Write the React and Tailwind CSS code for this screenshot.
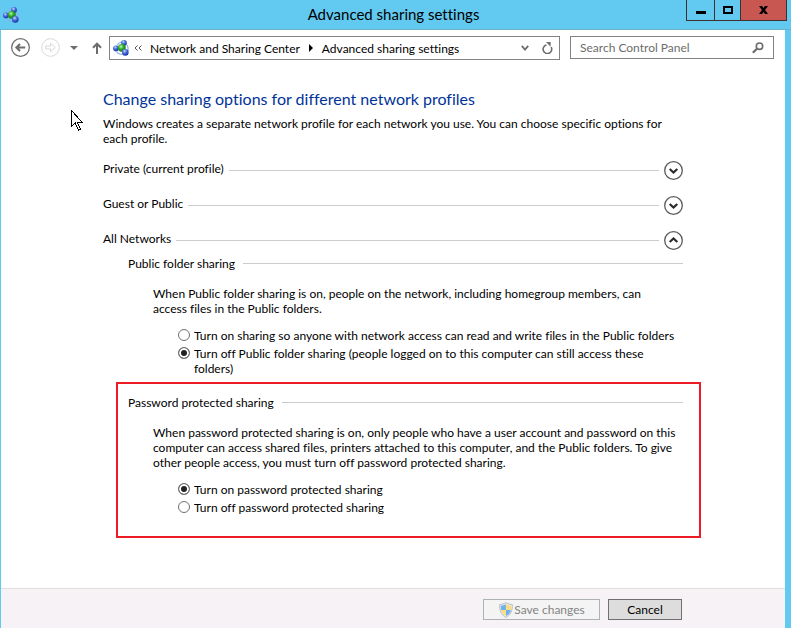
import { useState } from "react";

const NetworkIcon = ({ id }) => (
  <svg viewBox="0 0 16 16" className="h-4 w-4 shrink-0" aria-hidden="true">
    <defs>
      <radialGradient id={`${id}-blue`} cx="0.4" cy="0.3" r="0.7">
        <stop offset="0" stopColor="#c9dafa" />
        <stop offset="0.45" stopColor="#4a70d8" />
        <stop offset="1" stopColor="#1a32a8" />
      </radialGradient>
      <radialGradient id={`${id}-green`} cx="0.4" cy="0.35" r="0.7">
        <stop offset="0" stopColor="#c4f5b0" />
        <stop offset="0.45" stopColor="#2fae2c" />
        <stop offset="1" stopColor="#0a6a12" />
      </radialGradient>
    </defs>
    <path d="M4 5.500C5.500 3 7 2 9 2M14 5c1 1.500 1.300 3.500 1 6M3.500 11.500c1.300 2 3.500 3 5.500 3" fill="none" stroke="#8fb0ea" strokeWidth="1.200" />
    <circle cx="11" cy="3" r="2.900" fill={`url(#${id}-blue)`} />
    <circle cx="2.900" cy="8.400" r="2.800" fill={`url(#${id}-blue)`} />
    <circle cx="8.800" cy="7.800" r="3.900" fill={`url(#${id}-green)`} />
    <circle cx="12.300" cy="12.400" r="3.300" fill={`url(#${id}-blue)`} />
  </svg>
);

const ShieldIcon = () => (
  <svg viewBox="0 0 16 16" className="h-4 w-4 shrink-0" aria-hidden="true">
    <path d="M8 .5c2 1.400 4 1.900 6.300 2 .3 6-1.500 10.400-6.300 13C3.200 12.900 1.400 8.500 1.700 2.500 4 2.400 6 1.900 8 .5z" fill="#e9ebee" stroke="#b9bec5" />
    <path d="M7.900 2.300v5.700H3.100c-.2-1.400-.3-2.900-.2-4.300 1.800-.1 3.300-.6 5-1.400z" fill="#6fb1ee" />
    <path d="M8 2.300V8h4.900c.2-1.400.3-2.900.2-4.300-1.800-.1-3.300-.6-5.100-1.400z" fill="#fbdf7c" />
    <path d="M3.200 8h4.800v6C5.200 12.600 3.700 10.800 3.200 8z" fill="#fbdf7c" />
    <path d="M12.800 8H8v6c2.800-1.400 4.300-3.200 4.800-6z" fill="#6fb1ee" />
  </svg>
);

const Cursor = () => (
  <svg viewBox="0 0 12 21" className="absolute top-[110px] left-[71px] h-[21px] w-3" shapeRendering="crispEdges" aria-hidden="true">
    <path d="M.5.5v16l3.700-3.500 3.300 7.300 2-1-3.200-6.800h5z" fill="#fff" stroke="#000" />
  </svg>
);

const TitleBar = () => (
  <header className="grid h-[30px] grid-cols-[1fr_auto_1fr] items-start border-b border-[#6bb0d0] pr-1">
    <div className="pt-[7px] pl-[3px]">
      <NetworkIcon id="title" />
    </div>
    <h1 className="pt-[3px] text-[15px] leading-[22px]">Advanced sharing settings</h1>
    <div className="flex h-[21px] justify-self-end border-x border-b border-[#40312f]">
      <button aria-label="Minimize" className="flex w-7 justify-center border-r border-[#40312f] pt-[11px]">
        <span className="h-[3px] w-2.5 bg-black" />
      </button>
      <button aria-label="Maximize" className="flex w-[26px] justify-center border-r border-[#40312f] pt-1.5">
        <span className="h-2 w-2.5 border-2 border-black" />
      </button>
      <button aria-label="Close" className="flex w-[45px] justify-center bg-[#c75750] pt-1.5">
        <svg viewBox="0 0 9 8" className="h-2 w-[9px]">
          <path d="M0 0h3l1.500 2L6 0h3L6 4l3 4H6L4.500 6 3 8H0l3-4z" />
        </svg>
      </button>
    </div>
  </header>
);

const NavBar = () => (
  <nav className="flex items-start pt-1.5 pr-[11px] pl-2.5">
    <button aria-label="Back" className="mt-0.5">
      <svg viewBox="0 0 20 20" className="h-[19px] w-[19px]" fill="none" stroke="#6d6d6d">
        <circle cx="10" cy="10" r="9.300" strokeWidth="1.300" />
        <path d="M6 10h9M9.500 6.200L5.700 10l3.800 3.800" strokeWidth="2.200" />
      </svg>
    </button>
    <button aria-label="Forward" className="mt-0.5 ml-[11px]">
      <svg viewBox="0 0 20 20" className="h-[19px] w-[19px]" fill="none" stroke="#d6d6d6">
        <circle cx="10" cy="10" r="9.300" />
        <path d="M5 8.500h5V5.500l5 4.500-5 4.500v-3H5z" />
      </svg>
    </button>
    <button aria-label="Recent pages" className="mt-2.5 ml-2.5">
      <svg viewBox="0 0 8 4" className="h-1 w-2">
        <path d="M0 0h8L4 4z" fill="#6d6d6d" />
      </svg>
    </button>
    <button aria-label="Up" className="mt-1.5 ml-3.5">
      <svg viewBox="0 0 10 12" className="h-3 w-2.5" fill="none" stroke="#6d6d6d" strokeWidth="2">
        <path d="M5 12V2M1 5.700L5 1.700l4 4" />
      </svg>
    </button>
    <div className="ml-[7px] flex h-6 flex-1 items-center border border-[#828282] pr-1.5 pl-[3px]">
      <NetworkIcon id="address" />
      <svg viewBox="0 0 8 6" className="mx-[5px] h-1.5 w-2" fill="none" stroke="#555">
        <path d="M3.500.5L1 3l2.500 2.500M7.500.5L5 3l2.500 2.500" />
      </svg>
      <a href="#network" className="ml-[3px]">Network and Sharing Center</a>
      <svg viewBox="0 0 4 8" className="mx-[9px] h-2 w-1">
        <path d="M0 0l4 4-4 4z" />
      </svg>
      <a href="#advanced">Advanced sharing settings</a>
      <button aria-label="Previous locations" className="ml-auto">
        <svg viewBox="0 0 8 6" className="h-1.5 w-2" fill="none" stroke="#6d6d6d" strokeWidth="1.800">
          <path d="M.8.8L4 4.500 7.200.8" />
        </svg>
      </button>
      <button aria-label="Refresh" className="ml-3">
        <svg viewBox="0 0 12 12" className="h-3 w-3" fill="none" stroke="#6d6d6d" strokeWidth="1.600">
          <path d="M10.200 5.200A4.300 4.300 0 1 1 5.500 3" />
          <path d="M5 0h4.600v4.800z" fill="#6d6d6d" stroke="none" />
        </svg>
      </button>
    </div>
    <label className="ml-2.5 flex h-[23px] w-[204px] items-center border border-[#828282] px-[9px]">
      <input aria-label="Search Control Panel" placeholder="Search Control Panel" className="min-w-0 flex-1 outline-none placeholder:text-[#6d6d6d]" />
      <svg viewBox="0 0 12 12" className="h-3 w-3" fill="none" stroke="#6d6d6d">
        <circle cx="7.500" cy="4.200" r="3.200" strokeWidth="1.600" />
        <path d="M5 6.700L.8 10.800" strokeWidth="2.200" />
      </svg>
    </label>
  </nav>
);

const ProfileRow = ({ title, open }) => (
  <div className="mb-4 flex h-[19px] items-center">
    <h3 className="pb-[5px]">{title}</h3>
    <span className="mx-[5px] h-px flex-1 bg-[#cbcbcb]" />
    <button aria-label={title} aria-expanded={open}>
      <svg viewBox="0 0 19 19" className="h-[19px] w-[19px]" fill="none" stroke="#2b2b2b">
        <circle cx="9.500" cy="9.500" r="8.800" stroke="#5a5a5a" strokeWidth="1.300" />
        <path d={open ? "M5.700 11L9.500 7.500l3.800 3.500" : "M5.700 8L9.500 11.500 13.300 8"} strokeWidth="2.200" />
      </svg>
    </button>
  </div>
);

const GroupTitle = ({ children }) => (
  <div className="flex items-center">
    <h4>{children}</h4>
    <span className="ml-2 h-px flex-1 bg-[#cbcbcb]" />
  </div>
);

const Option = ({ name, value, selected, onChange, children }) => (
  <label className="flex items-start gap-1">
    <input
      type="radio"
      name={name}
      checked={selected === value}
      onChange={() => onChange(value)}
      className="mt-px h-3 w-3 shrink-0 appearance-none rounded-full border border-[#707070] bg-white checked:bg-[#222] checked:shadow-[inset_0_0_0_2px_#fff]"
    />
    <span>{children}</span>
  </label>
);

const App = () => {
  const [folder, setFolder] = useState("off");
  const [password, setPassword] = useState("on");

  return (
    <div className="relative flex min-h-screen flex-col bg-[#62caf0] font-['Lato',sans-serif] text-[12px] leading-[15px] text-black [font-variant-ligatures:none]">
      <TitleBar />
      <div className="mr-1.5 ml-px flex flex-1 flex-col bg-white">
        <NavBar />
        <main className="flex-1 px-[102px] pt-7 pb-[50px]">
          <h2 className="text-[16px] leading-[22px] text-[#003399]">Change sharing options for different network profiles</h2>
          <p className="mt-1.5 mb-[15px]">
            Windows creates a separate network profile for each network you use. You can choose specific options for each profile.
          </p>
          <ProfileRow title="Private (current profile)" />
          <ProfileRow title="Guest or Public" />
          <ProfileRow title="All Networks" open />

          <section className="-mt-2.5 ml-[25px]">
            <GroupTitle>Public folder sharing</GroupTitle>
            <div className="ml-[25px]">
              <p className="mt-[15px] pr-4">
                When Public folder sharing is on, people on the network, including homegroup members, can access files in the Public folders.
              </p>
              <div className="mt-3 ml-[25px] grid gap-[3px]">
                <Option name="folder" value="on" selected={folder} onChange={setFolder}>
                  Turn on sharing so anyone with network access can read and write files in the Public folders
                </Option>
                <Option name="folder" value="off" selected={folder} onChange={setFolder}>
                  Turn off Public folder sharing (people logged on to this computer can still access these folders)
                </Option>
              </div>
            </div>
          </section>

          <section className="mt-1.5 -mr-[18px] ml-[13px] border-2 border-[#ed1c24] pt-[11px] pr-4 pb-[21px] pl-2.5">
            <GroupTitle>Password protected sharing</GroupTitle>
            <div className="ml-[25px]">
              <p className="mt-[15px]">
                When password protected sharing is on, only people who have a user account and password on this computer can access shared files, printers attached to this computer, and the Public folders. To give other people access, you must turn off password protected sharing.
              </p>
              <div className="mt-3 ml-[25px] grid gap-[3px]">
                <Option name="password" value="on" selected={password} onChange={setPassword}>
                  Turn on password protected sharing
                </Option>
                <Option name="password" value="off" selected={password} onChange={setPassword}>
                  Turn off password protected sharing
                </Option>
              </div>
            </div>
          </section>
        </main>
        <footer className="flex h-10 items-start justify-end gap-2 border-t border-[#dfdfdf] bg-[#f6f2f6] pt-2.5 pr-[103px]">
          <button disabled className="flex h-[21px] w-[117px] items-center justify-center border border-[#adb2b5] bg-[#f4f4f4] text-[#838383]">
            <ShieldIcon />
            Save changes
          </button>
          <button className="h-[21px] w-[74px] border border-[#707070] bg-[#dddddd]">Cancel</button>
        </footer>
      </div>
      <Cursor />
    </div>
  );
};

export default App;
